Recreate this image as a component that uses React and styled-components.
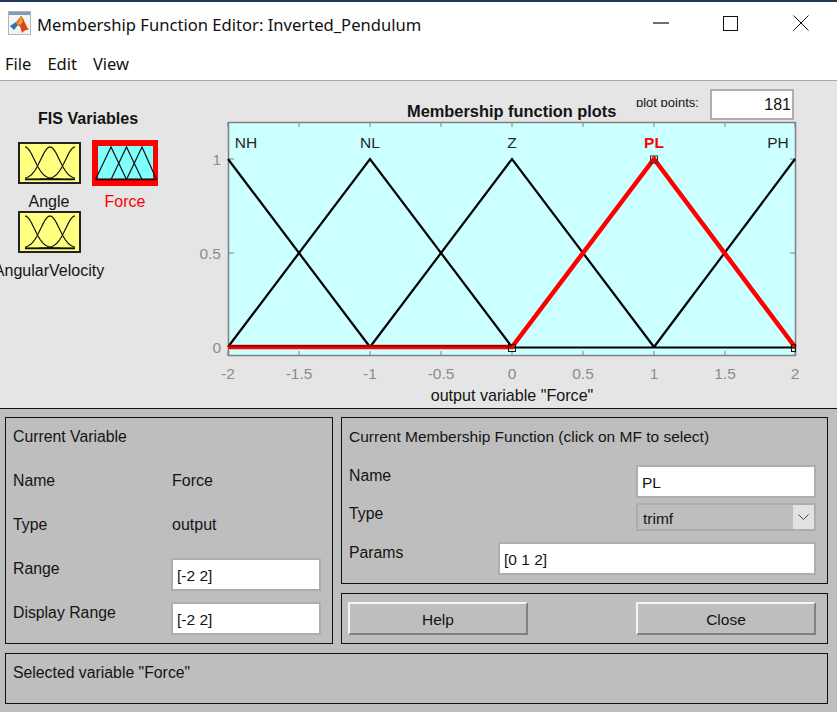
import React from "react";
import styled, { createGlobalStyle } from "styled-components";

const GlobalStyle = createGlobalStyle`
  html, body {
    margin: 0;
    padding: 0;
    background: #bebebe;
    overflow: hidden;
  }
`;

const Window = styled.div`
  width: 837px;
  height: 712px;
  display: flex;
  flex-direction: column;
  overflow: hidden;
  font-family: "Liberation Sans", Arial, sans-serif;
  font-size: 15.5px;
  color: #141414;
  background: #fff;
  border-top: 2px solid #1d3557;
  box-sizing: border-box;
`;

const TitleBar = styled.div`
  height: 42px;
  display: flex;
  align-items: center;
  padding-left: 8px;
  background: #fff;
`;
const AppIcon = styled.svg`
  width: 23px;
  height: 24px;
  flex: none;
`;
const TitleText = styled.div`
  flex: 1;
  margin-left: 6px;
  padding-top: 3px;
  font-family: "Noto Sans", sans-serif;
  font-size: 16.6px;
  color: #111;
  white-space: nowrap;
`;
const CaptionButton = styled.div`
  width: ${props => props.$width}px;
  height: 42px;
  display: flex;
  align-items: center;
  justify-content: center;
`;

const MenuBar = styled.div`
  height: 37px;
  flex: none;
  box-sizing: border-box;
  display: flex;
  align-items: center;
  gap: 16px;
  padding: 2px 0 0 5px;
  background: #fff;
  font-family: "Noto Sans", sans-serif;
  font-size: 16.5px;
  color: #111;
  border-bottom: 1px solid #a8a8a8;
`;

const Upper = styled.div`
  height: 328px;
  flex: none;
  display: flex;
  background: #e5e5e5;
  box-sizing: border-box;
  border-bottom: 1px solid #111;
`;

const VariablesColumn = styled.div`
  width: 190px;
  flex: none;
  box-sizing: border-box;
  padding: 27px 0 0 11px;
`;
const VariablesTitle = styled.div`
  width: 154px;
  text-align: center;
  font-size: 16.1px;
  font-weight: 700;
  line-height: 20px;
  margin-bottom: 14px;
`;
const VariablesGrid = styled.div`
  display: grid;
  grid-template-columns: 76px 76px;
`;
const VariableCell = styled.div`
  display: flex;
  flex-direction: column;
  align-items: center;
  gap: 9px;
`;
const IconSlot = styled.div`
  height: 42px;
  display: flex;
  align-items: center;
  justify-content: center;
`;
const VariableLabel = styled.div`
  font-size: 16px;
  line-height: 18px;
  white-space: nowrap;
  color: ${props => (props.$selected ? "#ff0000" : "#141414")};
`;

const PlotColumn = styled.div`
  flex: 1;
  padding-top: 8px;
  display: flex;
  flex-direction: column;
`;
const PlotHeader = styled.div`
  height: 31px;
  display: flex;
  align-items: flex-start;
  padding-left: 217px;
`;
const PlotTitle = styled.div`
  width: 229px;
  margin-top: 12px;
  font-size: 16.4px;
  font-weight: 700;
  line-height: 20px;
  white-space: nowrap;
`;
const PlotPointsLabel = styled.div`
  width: 74px;
  height: 10px;
  margin-top: 8px;
  overflow: hidden;
  font-size: 13px;
  line-height: 12px;
  white-space: nowrap;
`;
const Field = styled.input`
  box-sizing: border-box;
  width: ${props => props.$width}px;
  height: ${props => props.$height || 33}px;
  flex: none;
  padding: 3px 0 0 4px;
  border: 2px solid #adadb4;
  border-radius: 0;
  background: #fff;
  font-family: "Liberation Sans", Arial, sans-serif;
  font-size: 15.5px;
  color: #141414;
  text-align: ${props => props.$align || "left"};

  &:focus {
    outline: none;
  }
`;
const PlotPointsField = styled(Field)`
  padding: 0 1px 0 0;
  font-size: 16px;
`;
const PlotSvg = styled.svg`
  display: block;
  width: 647px;
  height: 265px;
  font-family: "Liberation Sans", Arial, sans-serif;
  font-size: 15.5px;
`;
const PlotCaption = styled.div`
  width: 644px;
  text-align: center;
  font-size: 16.1px;
  line-height: 20px;
`;

const Lower = styled.div`
  flex: 1;
  display: grid;
  grid-template-columns: 328px 487px;
  grid-template-rows: 167px 51px 51px;
  gap: 9px 8px;
  padding: 8px 0 0 5px;
  background: #bebebe;
`;
const Panel = styled.div`
  box-sizing: border-box;
  border: 1px solid #111;
  padding: 8px 11px 0 7px;
`;
const VariablePanel = styled(Panel)`
  grid-row: 1 / span 2;
  display: grid;
  grid-template-columns: 158px 150px;
  grid-auto-rows: 44px;
`;
const MfPanel = styled(Panel)`
  display: flex;
  flex-direction: column;
`;
const ButtonPanel = styled(Panel)`
  display: flex;
  justify-content: space-between;
  padding: 8px 11px 0 6px;
`;
const StatusPanel = styled(Panel)`
  grid-column: 1 / span 2;
  font-size: 15.8px;
  line-height: 22px;
`;
const PanelText = styled.div`
  font-size: 15.8px;
  line-height: 22px;
  white-space: nowrap;
`;
const ValueText = styled(PanelText)`
  padding-left: 1px;
  font-size: 16px;
`;
const WideRow = styled.div`
  grid-column: 1 / span 2;
`;
const MfTitle = styled(PanelText)`
  font-size: 15.5px;
  margin-bottom: 17px;
`;
const MfRow = styled.div`
  display: flex;
  justify-content: space-between;
  align-items: flex-start;
  margin-bottom: ${props => props.$gap || 0}px;
`;
const Select = styled.div`
  box-sizing: border-box;
  width: 180px;
  height: 28px;
  display: flex;
  border: 2px solid #adadad;
  background: #bebebe;
`;
const SelectValue = styled.div`
  flex: 1;
  padding: 3px 0 0 5px;
  line-height: 22px;
`;
const SelectArrow = styled.div`
  width: 21px;
  display: flex;
  align-items: center;
  justify-content: center;
  background: #e1e1e1;
`;
const PushButton = styled.div`
  box-sizing: border-box;
  width: 180px;
  height: 33px;
  display: flex;
  align-items: center;
  justify-content: center;
  padding-top: 2px;
  background: #bebebe;
  border: 2px solid;
  border-color: #f4f4f4 #808080 #808080 #f4f4f4;
`;

const gaussian = (center, sigma) => {
  const pts = [];
  for (let x = 7; x <= 57; x += 1) {
    const y = 37 - 32 * Math.exp(-((x - center) ** 2) / (2 * sigma * sigma));
    pts.push(`${x},${y.toFixed(2)}`);
  }
  return pts.join(" ");
};

const InputIcon = () => (
  <svg width="63" height="42" viewBox="0 0 63 42">
    <rect x="1" y="1" width="61" height="40" fill="#ffff80" stroke="#222" strokeWidth="2" />
    <line x1="7" y1="37.5" x2="57" y2="37.5" stroke="#111" strokeWidth="1.5" />
    {[7, 32, 57].map(c => (
      <polyline key={c} points={gaussian(c, 9.3)} fill="none" stroke="#111" strokeWidth="1.2" />
    ))}
  </svg>
);

const OutputIcon = () => (
  <svg width="66" height="46" viewBox="0 0 66 46">
    <rect x="0" y="0" width="66" height="46" fill="#ff0000" />
    <rect x="6" y="6" width="55" height="33" fill="#80ffff" />
    <line x1="6" y1="38.5" x2="61" y2="38.5" stroke="#888" />
    <line x1="3.5" y1="39.5" x2="64.5" y2="39.5" stroke="#111" strokeWidth="1.5" />
    {[[3.5, 19, 34.5], [19, 34.5, 50], [34.5, 50, 64.5]].map(([a, b, c]) => (
      <polyline
        key={b}
        points={`${a},39.5 ${b},7 ${c},39.5`}
        fill="none"
        stroke="#111"
        strokeWidth="1.2"
      />
    ))}
  </svg>
);

const xTicks = [
  ["-2", 228],
  ["-1.5", 299],
  ["-1", 370],
  ["-0.5", 441],
  ["0", 512],
  ["0.5", 583],
  ["1", 654],
  ["1.5", 725],
  ["2", 795],
];
const yTicks = [
  ["1", 159],
  ["0.5", 253],
  ["0", 347],
];
const mfLabels = [
  ["NH", 246],
  ["NL", 370],
  ["Z", 512],
  ["PH", 778],
];
const blackLines = [
  "228,159 370,347",
  "228,347 370,159 512,347",
  "370,347 512,159 654,347",
  "654,347 795,159",
  "228,347.5 795,347.5",
];

const MembershipPlot = () => (
  <PlotSvg viewBox="190 120 647 265">
    <rect x="228.5" y="122.5" width="567" height="233" fill="#ccffff" stroke="#808080" strokeWidth="1.5" />
    {xTicks.map(([label, x]) => (
      <g key={label}>
        <line x1={x} y1="122" x2={x} y2="127" stroke="#808080" />
        <line x1={x} y1="351" x2={x} y2="356" stroke="#808080" />
        <text x={x} y="379" fill="#8c8c8c" textAnchor="middle">{label}</text>
      </g>
    ))}
    {yTicks.map(([label, y]) => (
      <g key={label}>
        <line x1="228" y1={y} x2="234" y2={y} stroke="#808080" />
        <line x1="790" y1={y} x2="796" y2={y} stroke="#808080" />
        <text x="221" y={y + 6} fill="#8c8c8c" textAnchor="end">{label}</text>
      </g>
    ))}
    {mfLabels.map(([label, x]) => (
      <text key={label} x={x} y="148" fill="#262626" textAnchor="middle">{label}</text>
    ))}
    <text x="654" y="148" fill="#ff0000" fontWeight="700" textAnchor="middle">PL</text>
    {blackLines.map(points => (
      <polyline key={points} points={points} fill="none" stroke="#000" strokeWidth="2.2" />
    ))}
    <polyline points="228,347 512,347 654,159 795,347" fill="none" stroke="#ff0000" strokeWidth="4.5" />
    <line x1="228" y1="346" x2="512" y2="346" stroke="#7a0a0a" strokeWidth="1.5" />
    <rect x="508.5" y="344.5" width="7" height="7" fill="none" stroke="#111" />
    <rect x="650.5" y="156" width="7" height="7" fill="none" stroke="#333" />
    <rect x="791.5" y="344.5" width="4" height="7" fill="none" stroke="#111" />
  </PlotSvg>
);

const App = () => (
  <Window>
    <GlobalStyle />
    <TitleBar>
      <AppIcon viewBox="0 0 23 24">
        <rect x="0.5" y="0.5" width="22" height="23" fill="#f4f4f4" stroke="#b4b4b4" />
        <rect x="1" y="1" width="21" height="3" fill="#7f9db9" />
        <path d="M2 15 L8 11 L10 14 L6 19 Z" fill="#2f6fb7" />
        <path d="M8 11 L13 5 L16 10 L10 15 Z" fill="#e8742a" />
        <path d="M13 5 C15 6 18 15 21 19 C18 18 16 20 14 22 C13 18 12 14 10 14 Z" fill="#d9461b" />
        <path d="M13 5 L15 11 L12 14 L10 13 Z" fill="#f5a02a" />
      </AppIcon>
      <TitleText>Membership Function Editor: Inverted_Pendulum</TitleText>
      <CaptionButton $width={68}>
        <svg width="16" height="2" viewBox="0 0 16 2">
          <line x1="0" y1="1" x2="16" y2="1" stroke="#111" strokeWidth="1.2" />
        </svg>
      </CaptionButton>
      <CaptionButton $width={70}>
        <svg width="15" height="15" viewBox="0 0 15 15">
          <rect x="0.5" y="0.5" width="14" height="14" fill="none" stroke="#111" />
        </svg>
      </CaptionButton>
      <CaptionButton $width={72}>
        <svg width="16" height="16" viewBox="0 0 16 16">
          <path d="M0.5 0.5 L15.5 15.5 M15.5 0.5 L0.5 15.5" fill="none" stroke="#111" />
        </svg>
      </CaptionButton>
    </TitleBar>
    <MenuBar>
      <span>File</span>
      <span>Edit</span>
      <span>View</span>
    </MenuBar>
    <Upper>
      <VariablesColumn>
        <VariablesTitle>FIS Variables</VariablesTitle>
        <VariablesGrid>
          <VariableCell>
            <IconSlot><InputIcon /></IconSlot>
            <VariableLabel>Angle</VariableLabel>
          </VariableCell>
          <VariableCell>
            <IconSlot><OutputIcon /></IconSlot>
            <VariableLabel $selected>Force</VariableLabel>
          </VariableCell>
          <VariableCell>
            <IconSlot><InputIcon /></IconSlot>
            <VariableLabel>AngularVelocity</VariableLabel>
          </VariableCell>
        </VariablesGrid>
      </VariablesColumn>
      <PlotColumn>
        <PlotHeader>
          <PlotTitle>Membership function plots</PlotTitle>
          <PlotPointsLabel>plot points:</PlotPointsLabel>
          <PlotPointsField $width={84} $height={31} $align="right" readOnly value="181" />
        </PlotHeader>
        <MembershipPlot />
        <PlotCaption>output variable "Force"</PlotCaption>
      </PlotColumn>
    </Upper>
    <Lower>
      <VariablePanel>
        <WideRow><PanelText>Current Variable</PanelText></WideRow>
        <PanelText>Name</PanelText>
        <ValueText>Force</ValueText>
        <PanelText>Type</PanelText>
        <ValueText>output</ValueText>
        <PanelText>Range</PanelText>
        <Field $width={150} readOnly value="[-2 2]" />
        <PanelText>Display Range</PanelText>
        <Field $width={150} readOnly value="[-2 2]" />
      </VariablePanel>
      <MfPanel>
        <MfTitle>Current Membership Function (click on MF to select)</MfTitle>
        <MfRow $gap={5}>
          <PanelText>Name</PanelText>
          <Field $width={180} readOnly value="PL" />
        </MfRow>
        <MfRow $gap={11}>
          <PanelText>Type</PanelText>
          <Select>
            <SelectValue>trimf</SelectValue>
            <SelectArrow>
              <svg width="11" height="7" viewBox="0 0 11 7">
                <path d="M0.5 0.5 L5.5 5.5 L10.5 0.5" fill="none" stroke="#444" />
              </svg>
            </SelectArrow>
          </Select>
        </MfRow>
        <MfRow>
          <PanelText>Params</PanelText>
          <Field $width={318} readOnly value="[0 1 2]" />
        </MfRow>
      </MfPanel>
      <ButtonPanel>
        <PushButton>Help</PushButton>
        <PushButton>Close</PushButton>
      </ButtonPanel>
      <StatusPanel>Selected variable "Force"</StatusPanel>
    </Lower>
  </Window>
);

export default App;
